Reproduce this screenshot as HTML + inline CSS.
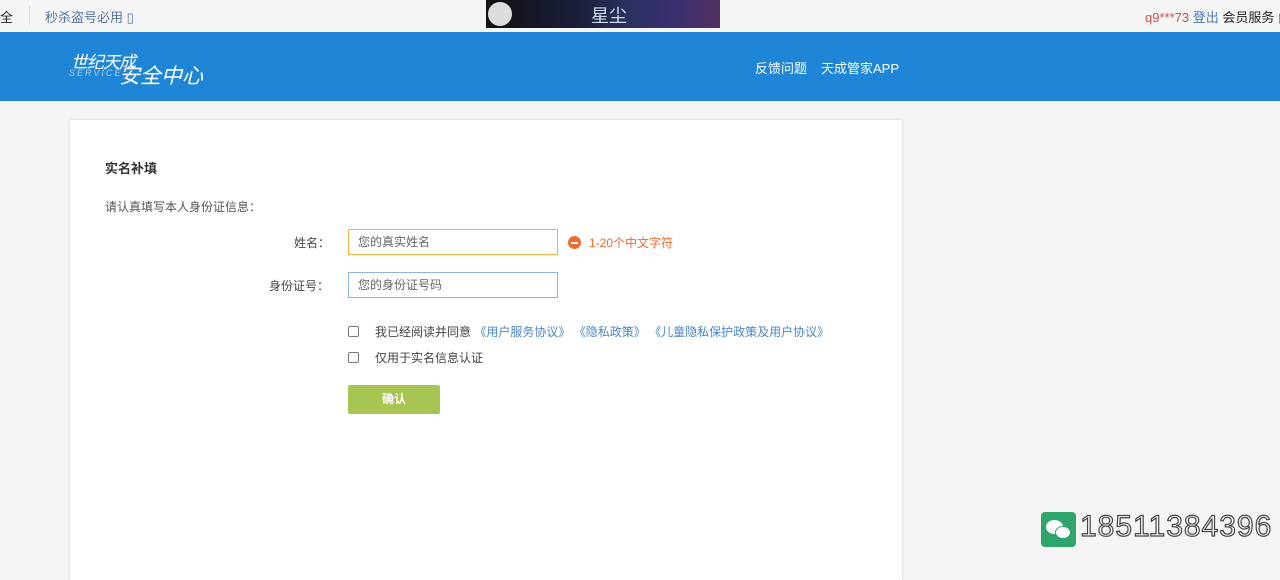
<!DOCTYPE html>
<html><head><meta charset="utf-8"><style>
*{margin:0;padding:0;box-sizing:border-box}
body{width:1280px;height:562px;overflow:hidden;background:#f4f4f4;font-family:"Liberation Sans","Noto Sans CJK SC",sans-serif;font-size:12px;color:#333;position:relative}
.abs{position:absolute;white-space:nowrap}
.top{position:absolute;left:0;top:0;width:1280px;height:32px;background:#f5f5f5}
.hdr{position:absolute;left:0;top:32px;width:1280px;height:69px;background:#1e85d7}
.card{position:absolute;left:70px;top:120px;width:832px;height:460px;background:#fff;box-shadow:0 0 3px rgba(0,0,0,.15)}
.inp{position:absolute;width:210px;height:26px;background:#fff;font-size:12px;color:#666;padding-left:9px;line-height:24px}
.cb{position:absolute;width:11px;height:11px;border:1px solid #777;border-radius:2px;background:#fff}
a{color:#4a86c9;text-decoration:none}
</style></head><body>
<div class="top">
<div class="abs" style="left:0;top:7px;font-size:13px;color:#222">全</div>
<div class="abs" style="left:29px;top:6px;width:1px;height:19px;background:#ddd"></div>
<div class="abs" style="left:45px;top:7px;font-size:13px;color:#5575a5">秒杀盗号必用 ▯</div>
<div class="abs" style="left:486px;top:0;width:234px;height:28px;background:linear-gradient(90deg,#111 0%,#1a1f3a 40%,#2a3060 60%,#3a3070 80%,#503060 100%)">
<span class="abs" style="left:2px;top:2px;width:24px;height:24px;border-radius:50%;background:#ddd"></span>
<span class="abs" style="left:105px;top:2px;color:#cde;font-size:18px">星尘</span></div>
<div class="abs" style="left:1145px;top:7px;font-size:13px"><span style="color:#c8524f">q9***73</span> <span style="color:#4a7bbf">登出</span> <span style="color:#222">会员服务</span> <span style="color:#4a7bbf">▯</span></div>
</div>
<div class="hdr">
<div class="abs" style="left:71px;top:16px;color:#fff;font-size:17px;font-style:italic;letter-spacing:-1px">世纪天成</div>
<div class="abs" style="left:69px;top:36px;color:#b8d0ea;font-size:9px;font-style:italic;letter-spacing:2px">SERVICE</div>
<div class="abs" style="left:119px;top:28px;color:#fff;font-size:21px;font-style:italic">安全中心</div>
<div class="abs" style="left:755px;top:26px;color:#fff;font-size:13px">反馈问题</div>
<div class="abs" style="left:821px;top:26px;color:#fff;font-size:13px">天成管家APP</div>
</div>
<div class="card">
<div class="abs" style="left:35px;top:38px;font-size:13px;font-weight:bold;color:#333">实名补填</div>
<div class="abs" style="left:35px;top:78px;color:#555">请认真填写本人身份证信息：</div>
<div class="abs" style="left:224px;top:114px;color:#444">姓名：</div>
<div class="inp" style="left:278px;top:109px;border:1px solid #f5b041">您的真实姓名</div>
<div class="abs" style="left:498px;top:116px;width:13px;height:13px;border-radius:50%;background:#f06b2f"><span class="abs" style="left:3px;top:6px;width:7px;height:2px;background:#fff"></span></div>
<div class="abs" style="left:519px;top:114px;color:#f06b2f">1-20个中文字符</div>
<div class="abs" style="left:199px;top:157px;color:#444">身份证号：</div>
<div class="inp" style="left:278px;top:152px;border:1px solid #8eb3e5">您的身份证号码</div>
<div class="cb" style="left:278px;top:206px"></div>
<div class="abs" style="left:305px;top:203px;color:#444">我已经阅读并同意 <a>《用户服务协议》</a> <a>《隐私政策》</a> <a>《儿童隐私保护政策及用户协议》</a></div>
<div class="cb" style="left:278px;top:232px"></div>
<div class="abs" style="left:305px;top:229px;color:#444">仅用于实名信息认证</div>
<div class="abs" style="left:278px;top:265px;width:92px;height:29px;background:#a8c553;border-radius:2px;color:#fff;font-weight:bold;text-align:center;line-height:29px">确认</div>
</div>
<div class="abs" style="left:1041px;top:512px;width:35px;height:35px;background:#2ea56a;border-radius:4px">
<span class="abs" style="left:5px;top:8px;width:17px;height:14px;border-radius:50%;background:#fff"></span>
<span class="abs" style="left:14px;top:14px;width:16px;height:13px;border-radius:50%;background:#fff;border:1px solid #2ea56a"></span></div>
<div class="abs" style="left:1080px;top:510px;font-size:30px;color:#fff;-webkit-text-stroke:1.2px #444;letter-spacing:1px">18511384396</div>
</body></html>
